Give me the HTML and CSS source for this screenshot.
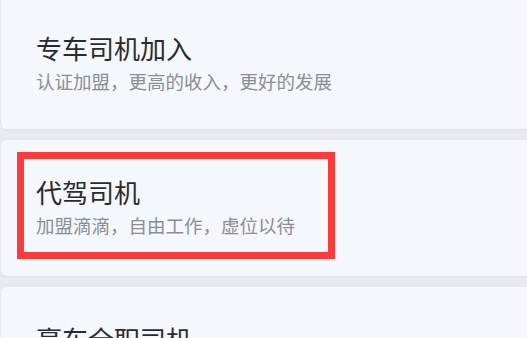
FILE: index.html
```html
<!DOCTYPE html>
<html lang="zh-CN">
<head>
    <meta charset="UTF-8">
    <meta name="viewport" content="width=device-width, initial-scale=1.0">
    <title>司机加入</title>
    <link rel="stylesheet" href="styles.css">
</head>
<body>
    <div class="list">
        <div class="card card-first">
            <div class="card-title">专车司机加入</div>
            <div class="card-desc">认证加盟，更高的收入，更好的发展</div>
        </div>
        <div class="card">
            <div class="card-title">代驾司机</div>
            <div class="card-desc">加盟滴滴，自由工作，虚位以待</div>
            <div class="highlight"></div>
        </div>
        <div class="card">
            <div class="card-title">豪车全职司机</div>
            <div class="card-desc">高端车型，稳定收入，专属服务</div>
        </div>
    </div>
</body>
</html>
```

FILE: styles.css
```css
body {
    font-family: "Noto Sans CJK SC", "Noto Sans", sans-serif;
    margin: 0;
    background-color: #e7eaf0;
    overflow: hidden;
}
.list {
    display: flex;
    flex-direction: column;
    gap: 11px;
    margin-top: -7px;
    margin-left: 1px;
    margin-right: -8px;
}
.card {
    position: relative;
    height: 136px;
    box-sizing: border-box;
    padding: 36px 0 0 35px;
    background: #f4f7fc;
    border-radius: 6px;
    box-shadow: 0 1px 2px rgba(0,0,0,0.04);
}
.card-first {
    padding-top: 39px;
}
.card-title {
    font-size: 26px;
    line-height: 32px;
    color: #2a2b2d;
}
.card-desc {
    margin-top: 5px;
    font-size: 18.5px;
    line-height: 24px;
    color: #8b8e93;
}
.highlight {
    position: absolute;
    top: 12px;
    left: 16px;
    width: 318px;
    height: 107px;
    box-sizing: border-box;
    border: 7px solid #fd3a3a;
}
```
